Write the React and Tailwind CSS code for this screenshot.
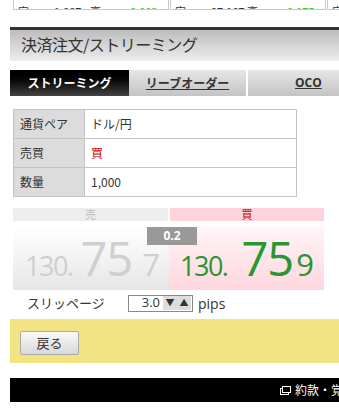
import React from 'react';

const jp = { fontFamily: '"MS PGothic", "Noto Sans CJK JP", sans-serif' };
const num = { fontFamily: '"Open Sans", "Noto Sans", sans-serif' };

function TickerCell({ low, high, w }) {
  return (
    <div className={`${w} h-[10px] border-x border-b border-[#c8c8c8] flex items-end overflow-hidden text-[11px] leading-[11px] text-[#333]`}>
      <div className="flex w-full -mb-[8px]">
        <span className="ml-[4px] w-[36px]">安:</span>
        <span className="w-[36px]">{low}</span>
        <span className="w-[40px]">高:</span>
        <span className="text-[#33cc33]">{high}</span>
      </div>
    </div>
  );
}

function Rate({ side, last }) {
  const buy = side === 'buy';
  return (
    <div
      className={`${buy ? 'w-[155px] bg-gradient-to-b from-[#fff5f7] to-[#ffd6de] text-[#2a9632] pl-[11px]' : 'w-[156px] bg-gradient-to-b from-[#fff] to-[#e6e6e6] text-[#cfcfcf] pl-[12px]'} flex items-baseline pt-[6px]`}
    >
      <span className="text-[27px] leading-[50px] tracking-[-1.5px]">130.</span>
      <span className={`text-[47px] leading-[50px] tracking-[-1px] ${buy ? 'ml-[14px]' : 'ml-[8px]'}`}>75</span>
      <span className={`text-[31px] leading-[50px] ${buy ? 'ml-[3px]' : 'ml-[10px]'}`}>{last}</span>
    </div>
  );
}

export default function App() {
  return (
    <div className="w-[339px] h-[408px] overflow-hidden bg-white" style={jp}>
      {/* ticker strip */}
      <div className="flex pl-[13px] gap-[1px] w-[400px]">
        <TickerCell low="1.987" high="0.003" w="w-[156px]" />
        <TickerCell low="97.167" high="0.175" w="w-[156px]" />
        <TickerCell low="" high="" w="w-[60px]" />
      </div>

      <div className="pl-[10px] w-[360px]">
        {/* title */}
        <div className="mt-[17px] border-t-[3px] border-[#333] h-[34px] bg-gradient-to-b from-[#bdbdbd] to-[#ededed] flex items-center pl-[11px] pb-[4px]">
          <span className="text-[16px] text-[#333] tracking-[-0.5px]">決済注文/ストリーミング</span>
        </div>

        {/* tabs */}
        <div className="mt-[9px] flex h-[26px] text-[12px] font-bold">
          <div className="w-[119px] bg-gradient-to-b from-[#000] via-[#111] to-[#444] text-white flex items-center justify-center">ストリーミング</div>
          <div className="w-[119px] bg-gradient-to-b from-[#e6e6e6] to-[#c4c4c4] text-[#333] flex items-center justify-center underline border-r-2 border-white">リーブオーダー</div>
          <div className="w-[100px] bg-gradient-to-b from-[#e6e6e6] to-[#c4c4c4] text-[#333] flex items-center pl-[47px] underline" style={num}>OCO</div>
        </div>

        {/* info table */}
        <table className="mt-[13px] ml-[3px] w-[284px] border-collapse text-[12px] text-[#333]">
          <tbody>
            {[
              ['通貨ペア', 'ドル/円', ''],
              ['売買', '買', 'text-[#c00]'],
              ['数量', '1,000', ''],
            ].map(([k, v, c]) => (
              <tr key={k} className="h-[29px]">
                <td className="w-[71px] bg-[#dcdcdc] border border-[#c4c4c4] pl-[6px]">{k}</td>
                <td className={`border border-[#c4c4c4] pl-[6px] bg-white ${c}`}>{v}</td>
              </tr>
            ))}
          </tbody>
        </table>

        {/* rates */}
        <div className="mt-[11px] ml-[3px] w-[311px]">
          <div className="flex h-[13px] text-[11px] leading-[13px]">
            <div className="w-[155px] bg-[#eeeeee] text-[#bbb] text-center">売</div>
            <div className="w-[2px]" />
            <div className="w-[154px] bg-[#ffd3dc] text-[#c00] text-center">買</div>
          </div>
          <div className="relative flex h-[63px] mt-[6px]" style={num}>
            <Rate side="sell" last="7" />
            <Rate side="buy" last="9" />
            <div className="absolute left-[134px] top-0 w-[50px] h-[18px] bg-[#999] text-white text-[12px] font-bold flex items-center justify-center">0.2</div>
          </div>
        </div>

        {/* slippage */}
        <div className="flex items-center h-[26px] text-[13px] text-[#333]">
          <span className="ml-[17px] w-[101px]">スリッページ</span>
          <div className="w-[65px] h-[17px] border border-[#888] flex items-center justify-end bg-white">
            <span className="text-[13px] mr-[3px]" style={num}>3.0</span>
            <span className="w-[14px] h-[14px] bg-[#ddd] flex items-center justify-center text-[9px] text-[#333]">▼</span>
            <span className="w-[14px] h-[14px] bg-[#ddd] flex items-center justify-center text-[9px] text-[#333] mr-[1px]">▲</span>
          </div>
          <span className="ml-[5px] text-[14px]" style={num}>pips</span>
        </div>

        {/* yellow button area */}
        <div className="mt-[3px] h-[44px] bg-[#f2e482] flex items-start pl-[10px] pt-[12px]">
          <button className="w-[59px] h-[24px] border border-[#aaa] rounded-[2px] bg-gradient-to-b from-[#fafafa] to-[#d8d8d8] text-[13px] text-[#333]">戻る</button>
        </div>

        {/* footer */}
        <div className="mt-[15px] h-[24px] bg-black flex items-center pl-[270px] text-white text-[12px] whitespace-nowrap">
          <svg width="11" height="9" viewBox="0 0 11 9" className="mr-[4px] shrink-0">
            <rect x="0.5" y="2.5" width="8" height="6" fill="none" stroke="white" />
            <rect x="2.5" y="0.5" width="8" height="6" fill="black" stroke="white" />
          </svg>
          <span>約款・覚書</span>
        </div>
      </div>
    </div>
  );
}
